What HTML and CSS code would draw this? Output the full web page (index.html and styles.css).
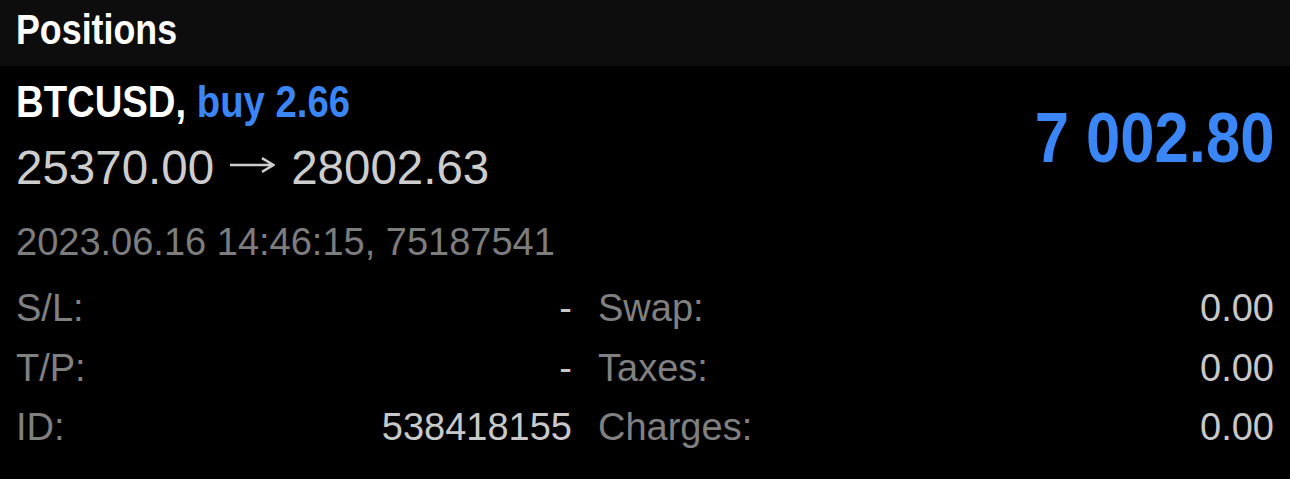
FILE: index.html
```html
<!DOCTYPE html>
<html lang="en">
<head>
<meta charset="utf-8">
<title>Positions</title>
<link rel="stylesheet" href="styles.css">
</head>
<body>
<header class="header">
  <span class="header-title">Positions</span>
</header>
<main class="position">
  <section class="summary">
    <div class="summary-main">
      <div class="symbol-line"><span class="symbol-text">BTCUSD, <span class="side">buy 2.66</span></span></div>
      <div class="price-line">25370.00<svg class="arrow" width="46" height="20" viewBox="0 0 46 20" aria-label="→"><path d="M1 10H44.5M33 3.2L44.5 10L33 16.8" fill="none" stroke="currentColor" stroke-width="2.6" stroke-linejoin="miter"/></svg>28002.63</div>
    </div>
    <div class="profit"><span class="profit-text">7 002.80</span></div>
  </section>
  <div class="meta">2023.06.16 14:46:15, 75187541</div>
  <section class="details">
    <div class="detail"><span class="label">S/L:</span><span class="value">-</span></div>
    <div class="detail"><span class="label">Swap:</span><span class="value">0.00</span></div>
    <div class="detail"><span class="label">T/P:</span><span class="value">-</span></div>
    <div class="detail"><span class="label">Taxes:</span><span class="value">0.00</span></div>
    <div class="detail"><span class="label">ID:</span><span class="value">538418155</span></div>
    <div class="detail"><span class="label">Charges:</span><span class="value">0.00</span></div>
  </section>
</main>
</body>
</html>
```

FILE: styles.css
```css
html, body {
  margin: 0;
  padding: 0;
  background: #000;
}

body {
  font-family: "Liberation Sans", Arial, sans-serif;
  color: #fff;
  width: 1290px;
  height: 479px;
  overflow: hidden;
}

.header {
  height: 66px;
  background: #0d0d0d;
  padding: 0 16px;
  box-sizing: border-box;
}

.header-title {
  display: inline-block;
  font-size: 42px;
  font-weight: 700;
  line-height: 60px;
  transform: scaleX(0.852);
  transform-origin: left center;
  color: #fff;
}

.position {
  padding: 0 16px;
}

.summary {
  display: flex;
  justify-content: space-between;
  align-items: flex-start;
  padding-top: 10px;
}

.symbol-line {
  font-size: 43.5px;
  font-weight: 700;
  line-height: 52px;
  white-space: nowrap;
}

.symbol-text {
  display: inline-block;
  transform: scaleX(0.88);
  transform-origin: left center;
}

.side {
  color: #3b86f7;
}

.price-line {
  margin-top: 12px;
  font-size: 47.5px;
  line-height: 56px;
  color: #cdcdcd;
  white-space: nowrap;
}

.arrow {
  display: inline-block;
  vertical-align: 9px;
  margin: 0 16px 0 15px;
  color: #cdcdcd;
}

.profit {
  margin-top: 22px;
  font-size: 70px;
  font-weight: 700;
  line-height: 80px;
  color: #3b86f7;
  white-space: nowrap;
}

.profit-text {
  display: inline-block;
  transform: scaleX(0.88);
  transform-origin: right center;
}

.meta {
  margin-top: 22px;
  font-size: 38px;
  line-height: 48px;
  color: #7d7d7d;
  white-space: nowrap;
}

.details {
  margin-top: 13px;
  display: grid;
  grid-template-columns: 556px 1fr;
  column-gap: 26px;
  font-size: 38px;
  line-height: 59.5px;
}

.detail {
  display: flex;
  justify-content: space-between;
}

.label {
  color: #808080;
}

.value {
  color: #c8c8c8;
}
```
